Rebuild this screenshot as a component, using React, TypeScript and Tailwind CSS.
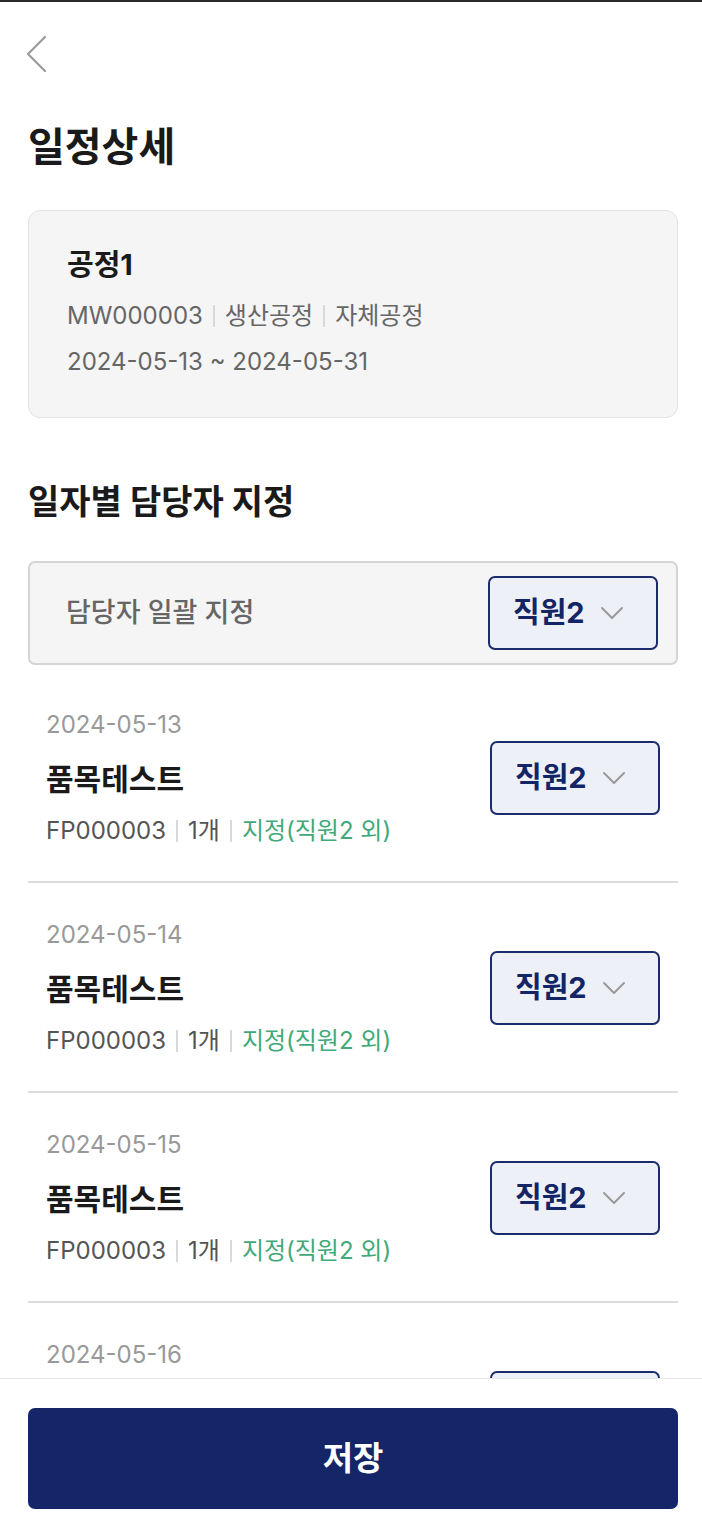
import React from "react";

const items = [
  { date: "2024-05-13" },
  { date: "2024-05-14" },
  { date: "2024-05-15" },
  { date: "2024-05-16" },
];

const Chevron = () => (
  <svg width="24" height="14" viewBox="0 0 24 14" fill="none">
    <path d="M2 2l10 10L22 2" stroke="#9a9a9a" strokeWidth="2" strokeLinecap="round" strokeLinejoin="round" />
  </svg>
);

const Bar = () => <span className="inline-block w-[2px] h-[22px] bg-[#d9d9d9] mx-[10px]" />;

const StaffSelect = () => (
  <button className="w-[170px] h-[74px] shrink-0 flex items-center justify-between pl-[23px] pr-[32px] rounded-[7px] border-2 border-[#1b2b6b] bg-[#eef0f7]">
    <span className="text-[29px] font-bold text-[#142565]">직원2</span>
    <Chevron />
  </button>
);

const App = () => {
  return (
    <div className="h-screen flex flex-col bg-white font-['Inter','Noto_Sans_CJK_KR',sans-serif] border-t-2 border-[#2a2a2a]">
      <div className="flex-1 overflow-hidden">
        <div className="pl-[25px] pt-[33px]">
          <svg width="24" height="38" viewBox="0 0 24 38" fill="none">
            <path d="M20 2L3 19l17 17" stroke="#9a9a9a" strokeWidth="2.2" strokeLinecap="round" strokeLinejoin="round" />
          </svg>
        </div>

        <div className="pl-[28px] pr-[24px]">
          <h1 className="mt-[50px] text-[40px] leading-[48px] font-bold text-[#1a1a1a]">일정상세</h1>

          <div className="mt-[39px] rounded-[12px] border border-[#e3e3e3] bg-[#f5f5f5] pl-[38px] pt-[36px] pb-[39px]">
            <div className="text-[29px] leading-[36px] font-bold text-[#1a1a1a]">공정1</div>
            <div className="mt-[17px] flex items-center text-[24px] leading-[32px] text-[#666]">
              <span>MW000003</span>
              <Bar />
              <span>생산공정</span>
              <Bar />
              <span>자체공정</span>
            </div>
            <div className="mt-[14px] text-[24px] leading-[32px] text-[#666]">2024-05-13 ~ 2024-05-31</div>
          </div>

          <h2 className="mt-[64px] text-[34px] leading-[40px] font-bold text-[#1a1a1a]">일자별 담당자 지정</h2>

          <div className="mt-[39px] flex items-center justify-between rounded-[7px] border-2 border-[#d4d4d4] bg-[#f5f5f5] pl-[36px] pr-[18px] py-[13px]">
            <span className="text-[27px] font-medium text-[#666]">담당자 일괄 지정</span>
            <StaffSelect />
          </div>

          <div className="mt-[8px]">
            {items.map((it) => (
              <div key={it.date} className="flex items-center justify-between px-[18px] pt-[36px] pb-[34px] border-b-2 border-[#dcdcdc]">
                <div>
                  <div className="text-[24px] leading-[32px] text-[#999]">{it.date}</div>
                  <div className="mt-[20px] text-[30px] leading-[36px] font-bold text-[#1a1a1a]">품목테스트</div>
                  <div className="mt-[18px] flex items-center text-[24px] leading-[32px] text-[#555]">
                    <span>FP000003</span>
                    <Bar />
                    <span>1개</span>
                    <Bar />
                    <span className="text-[#3fa97a]">지정(직원2 외)</span>
                  </div>
                </div>
                <StaffSelect />
              </div>
            ))}
          </div>
        </div>
      </div>

      <div className="shrink-0 bg-white border-t border-[#e6e6e6] pl-[28px] pr-[24px] pt-[29px] pb-[29px]">
        <button className="w-full h-[101px] rounded-[7px] bg-[#142667] text-white text-[33px] font-bold">저장</button>
      </div>
    </div>
  );
};

export default App;
